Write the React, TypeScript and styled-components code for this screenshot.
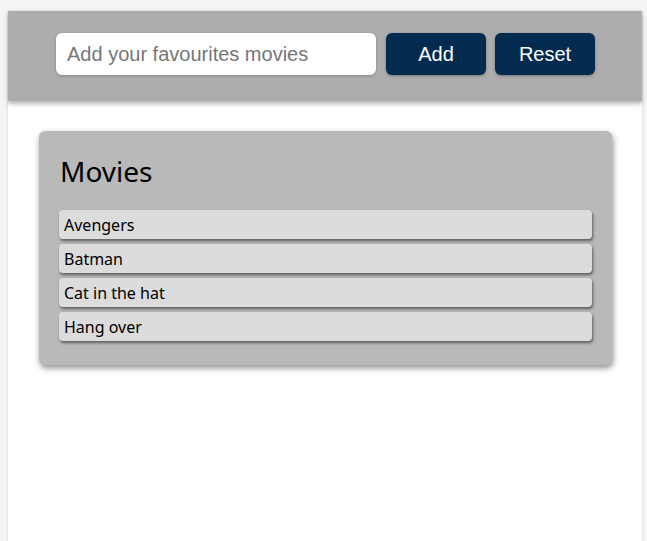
import React from "react";
import styled, { createGlobalStyle } from "styled-components";

const Global = createGlobalStyle`
  html, body { margin: 0; padding: 0; background: #f4f4f4; }
  body { padding: 11px 0 0 8px; }
`;

const Page = styled.div`
  width: 634px;
  min-height: 530px;
  background: #ffffff;
  box-shadow: 0 0 2px rgba(0, 0, 0, 0.18);
`;

const Header = styled.header`
  height: 90px;
  box-sizing: border-box;
  background: #adadad;
  display: flex;
  align-items: flex-start;
  justify-content: flex-start;
  padding: 22px 0 0 48px;
  box-shadow: 0 3px 4px rgba(0, 0, 0, 0.28);
  position: relative;
`;

const Input = styled.input`
  width: 320px;
  height: 42px;
  box-sizing: border-box;
  border: none;
  border-radius: 6px;
  background: #fff;
  padding: 0 11px;
  font-family: "Liberation Sans", Arial, sans-serif;
  font-size: 20px;
  color: #222;
  outline: none;
  box-shadow: 0 1px 3px rgba(0, 0, 0, 0.25);
  &::placeholder { color: #767676; }
`;

const Button = styled.button<{ $gap: number }>`
  width: 100px;
  height: 42px;
  margin-left: ${(p) => p.$gap}px;
  border: none;
  border-radius: 6px;
  background: #032b50;
  color: #fff;
  font-family: "Liberation Sans", Arial, sans-serif;
  font-size: 20px;
  box-shadow: 0 1px 3px rgba(0, 0, 0, 0.3);
  cursor: pointer;
`;

const Card = styled.section`
  margin: 30px 30px 0 31px;
  background: #b9b9b9;
  border-radius: 6px;
  padding: 21px 20px 24px;
  box-shadow: 1px 3px 6px rgba(0, 0, 0, 0.45);
  font-family: "Noto Sans", sans-serif;
`;

const Title = styled.h1`
  margin: 0 0 20px 1px;
  font-size: 28px;
  font-weight: 400;
  color: #000;
  line-height: 38px;
`;

const List = styled.ul`
  list-style: none;
  margin: 0;
  padding: 0;
  display: flex;
  flex-direction: column;
  gap: 5px;
`;

const Item = styled.li`
  background: #dcdcdc;
  border-radius: 4px;
  height: 29px;
  box-sizing: border-box;
  padding: 4px 5px 0;
  font-size: 16px;
  line-height: 22px;
  color: #000;
  box-shadow: 1px 2px 3px rgba(0, 0, 0, 0.5);
`;

const movies = ["Avengers", "Batman", "Cat in the hat", "Hang over"];

export default function App() {
  return (
    <>
      <Global />
      <Page>
        <Header>
          <Input placeholder="Add your favourites movies" />
          <Button $gap={10}>Add</Button>
          <Button $gap={9}>Reset</Button>
        </Header>
        <Card>
          <Title>Movies</Title>
          <List>
            {movies.map((m) => (
              <Item key={m}>{m}</Item>
            ))}
          </List>
        </Card>
      </Page>
    </>
  );
}
